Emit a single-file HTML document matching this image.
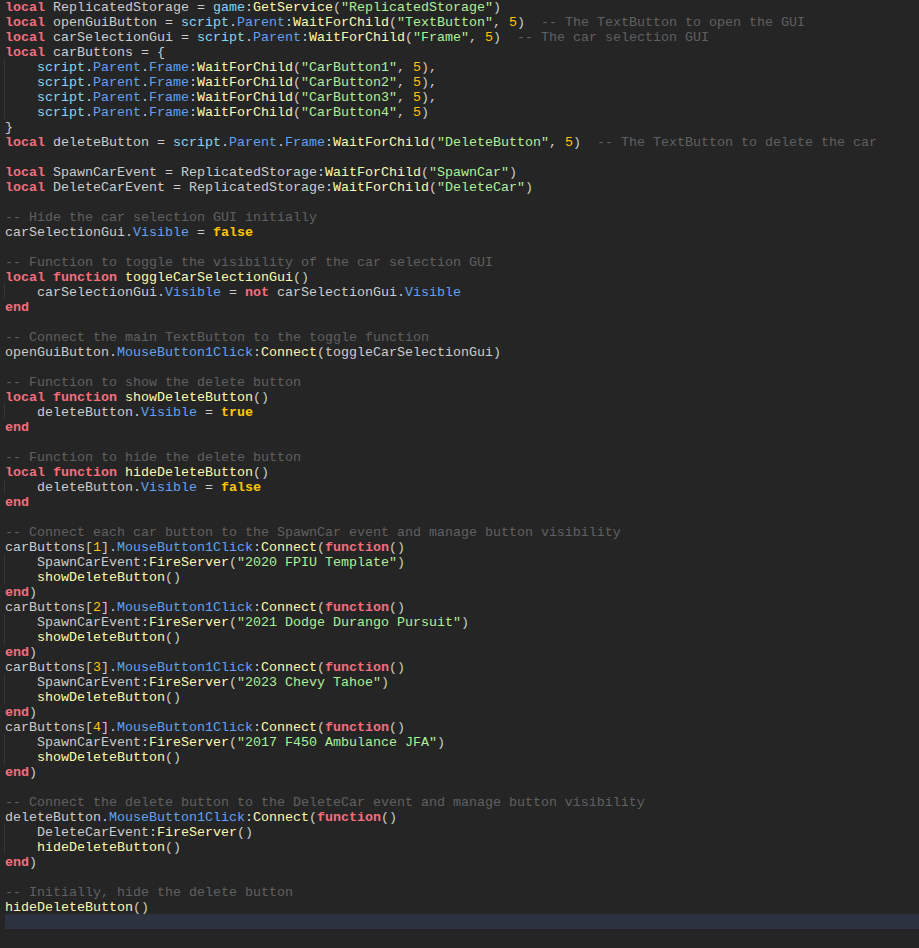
<!DOCTYPE html>
<html><head><meta charset="utf-8"><title>Script</title>
<style>
html,body{margin:0;padding:0;background:#252525;}
body{width:919px;height:948px;overflow:hidden;position:relative;}
#code{position:absolute;left:5px;top:-1px;right:0;font-family:"Liberation Mono",monospace;font-size:13.333px;line-height:15px;color:#cccccc;letter-spacing:0px;}
.l{height:15px;white-space:pre;overflow:visible;}
.l>i{font-style:normal;position:relative;top:1px;display:block;height:15px;}
.cur{background:#2d3241;}
.k{color:#f86d7c;font-weight:bold;}
.b{color:#ffc600;font-weight:bold;}
.n{color:#ffc600;}
.s{color:#adf195;}
.c{color:#606060;}
.g{color:#84d6f7;}
.p{color:#61a1f1;}
.f{color:#fdfbac;}
.ig{position:absolute;left:4px;width:1px;background:#363636;}
</style></head><body>
<div class="ig" style="top:59px;height:60px"></div>
<div class="ig" style="top:284px;height:15px"></div>
<div class="ig" style="top:404px;height:15px"></div>
<div class="ig" style="top:479px;height:15px"></div>
<div class="ig" style="top:554px;height:30px"></div>
<div class="ig" style="top:614px;height:30px"></div>
<div class="ig" style="top:674px;height:30px"></div>
<div class="ig" style="top:734px;height:30px"></div>
<div class="ig" style="top:824px;height:30px"></div>
<div id="code">
<div class="l"><i><span class="k">local</span> ReplicatedStorage = <span class="g">game</span>:<span class="f">GetService</span>(<span class="s">"ReplicatedStorage"</span>)</i></div>
<div class="l"><i><span class="k">local</span> openGuiButton = <span class="g">script</span>.<span class="p">Parent</span>:<span class="f">WaitForChild</span>(<span class="s">"TextButton"</span>, <span class="n">5</span>)  <span class="c">-- The TextButton to open the GUI</span></i></div>
<div class="l"><i><span class="k">local</span> carSelectionGui = <span class="g">script</span>.<span class="p">Parent</span>:<span class="f">WaitForChild</span>(<span class="s">"Frame"</span>, <span class="n">5</span>)  <span class="c">-- The car selection GUI</span></i></div>
<div class="l"><i><span class="k">local</span> carButtons = {</i></div>
<div class="l"><i>    <span class="g">script</span>.<span class="p">Parent</span>.<span class="p">Frame</span>:<span class="f">WaitForChild</span>(<span class="s">"CarButton1"</span>, <span class="n">5</span>),</i></div>
<div class="l"><i>    <span class="g">script</span>.<span class="p">Parent</span>.<span class="p">Frame</span>:<span class="f">WaitForChild</span>(<span class="s">"CarButton2"</span>, <span class="n">5</span>),</i></div>
<div class="l"><i>    <span class="g">script</span>.<span class="p">Parent</span>.<span class="p">Frame</span>:<span class="f">WaitForChild</span>(<span class="s">"CarButton3"</span>, <span class="n">5</span>),</i></div>
<div class="l"><i>    <span class="g">script</span>.<span class="p">Parent</span>.<span class="p">Frame</span>:<span class="f">WaitForChild</span>(<span class="s">"CarButton4"</span>, <span class="n">5</span>)</i></div>
<div class="l"><i>}</i></div>
<div class="l"><i><span class="k">local</span> deleteButton = <span class="g">script</span>.<span class="p">Parent</span>.<span class="p">Frame</span>:<span class="f">WaitForChild</span>(<span class="s">"DeleteButton"</span>, <span class="n">5</span>)  <span class="c">-- The TextButton to delete the car</span></i></div>
<div class="l"></div>
<div class="l"><i><span class="k">local</span> SpawnCarEvent = ReplicatedStorage:<span class="f">WaitForChild</span>(<span class="s">"SpawnCar"</span>)</i></div>
<div class="l"><i><span class="k">local</span> DeleteCarEvent = ReplicatedStorage:<span class="f">WaitForChild</span>(<span class="s">"DeleteCar"</span>)</i></div>
<div class="l"></div>
<div class="l"><i><span class="c">-- Hide the car selection GUI initially</span></i></div>
<div class="l"><i>carSelectionGui.<span class="p">Visible</span> = <span class="b">false</span></i></div>
<div class="l"></div>
<div class="l"><i><span class="c">-- Function to toggle the visibility of the car selection GUI</span></i></div>
<div class="l"><i><span class="k">local</span> <span class="k">function</span> <span class="f">toggleCarSelectionGui</span>()</i></div>
<div class="l"><i>    carSelectionGui.<span class="p">Visible</span> = <span class="k">not</span> carSelectionGui.<span class="p">Visible</span></i></div>
<div class="l"><i><span class="k">end</span></i></div>
<div class="l"></div>
<div class="l"><i><span class="c">-- Connect the main TextButton to the toggle function</span></i></div>
<div class="l"><i>openGuiButton.<span class="p">MouseButton1Click</span>:<span class="f">Connect</span>(toggleCarSelectionGui)</i></div>
<div class="l"></div>
<div class="l"><i><span class="c">-- Function to show the delete button</span></i></div>
<div class="l"><i><span class="k">local</span> <span class="k">function</span> <span class="f">showDeleteButton</span>()</i></div>
<div class="l"><i>    deleteButton.<span class="p">Visible</span> = <span class="b">true</span></i></div>
<div class="l"><i><span class="k">end</span></i></div>
<div class="l"></div>
<div class="l"><i><span class="c">-- Function to hide the delete button</span></i></div>
<div class="l"><i><span class="k">local</span> <span class="k">function</span> <span class="f">hideDeleteButton</span>()</i></div>
<div class="l"><i>    deleteButton.<span class="p">Visible</span> = <span class="b">false</span></i></div>
<div class="l"><i><span class="k">end</span></i></div>
<div class="l"></div>
<div class="l"><i><span class="c">-- Connect each car button to the SpawnCar event and manage button visibility</span></i></div>
<div class="l"><i>carButtons[<span class="n">1</span>].<span class="p">MouseButton1Click</span>:<span class="f">Connect</span>(<span class="k">function</span>()</i></div>
<div class="l"><i>    SpawnCarEvent:<span class="f">FireServer</span>(<span class="s">"2020 FPIU Template"</span>)</i></div>
<div class="l"><i>    <span class="f">showDeleteButton</span>()</i></div>
<div class="l"><i><span class="k">end</span>)</i></div>
<div class="l"><i>carButtons[<span class="n">2</span>].<span class="p">MouseButton1Click</span>:<span class="f">Connect</span>(<span class="k">function</span>()</i></div>
<div class="l"><i>    SpawnCarEvent:<span class="f">FireServer</span>(<span class="s">"2021 Dodge Durango Pursuit"</span>)</i></div>
<div class="l"><i>    <span class="f">showDeleteButton</span>()</i></div>
<div class="l"><i><span class="k">end</span>)</i></div>
<div class="l"><i>carButtons[<span class="n">3</span>].<span class="p">MouseButton1Click</span>:<span class="f">Connect</span>(<span class="k">function</span>()</i></div>
<div class="l"><i>    SpawnCarEvent:<span class="f">FireServer</span>(<span class="s">"2023 Chevy Tahoe"</span>)</i></div>
<div class="l"><i>    <span class="f">showDeleteButton</span>()</i></div>
<div class="l"><i><span class="k">end</span>)</i></div>
<div class="l"><i>carButtons[<span class="n">4</span>].<span class="p">MouseButton1Click</span>:<span class="f">Connect</span>(<span class="k">function</span>()</i></div>
<div class="l"><i>    SpawnCarEvent:<span class="f">FireServer</span>(<span class="s">"2017 F450 Ambulance JFA"</span>)</i></div>
<div class="l"><i>    <span class="f">showDeleteButton</span>()</i></div>
<div class="l"><i><span class="k">end</span>)</i></div>
<div class="l"></div>
<div class="l"><i><span class="c">-- Connect the delete button to the DeleteCar event and manage button visibility</span></i></div>
<div class="l"><i>deleteButton.<span class="p">MouseButton1Click</span>:<span class="f">Connect</span>(<span class="k">function</span>()</i></div>
<div class="l"><i>    DeleteCarEvent:<span class="f">FireServer</span>()</i></div>
<div class="l"><i>    <span class="f">hideDeleteButton</span>()</i></div>
<div class="l"><i><span class="k">end</span>)</i></div>
<div class="l"></div>
<div class="l"><i><span class="c">-- Initially, hide the delete button</span></i></div>
<div class="l"><i><span class="f">hideDeleteButton</span>()</i></div>
<div class="l cur"></div>
</div>
</body></html>
